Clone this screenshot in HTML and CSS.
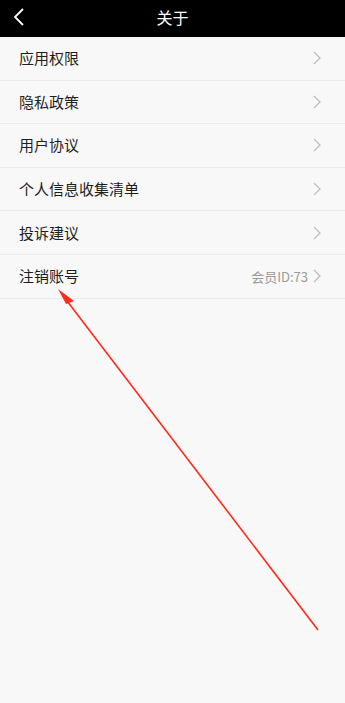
FILE: index.html
```html
<!DOCTYPE html>
<html lang="zh">
<head>
<meta charset="utf-8">
<link rel="stylesheet" href="styles.css">
</head>
<body>
<div class="page">
  <header class="bar">
    <svg class="back" width="14" height="20" viewBox="0 0 14 20"><path d="M11 2 L3 10 L11 18" fill="none" stroke="#fff" stroke-width="1.8"/></svg>
    <div class="title">关于</div>
  </header>
  <ul class="list">
    <li class="row"><span class="label">应用权限</span><span class="right"><svg class="chev" width="8" height="14" viewBox="0 0 8 14"><path d="M1 1 L7 7 L1 13" fill="none" stroke="#bdbdbd" stroke-width="1.2"/></svg></span></li>
    <li class="row"><span class="label">隐私政策</span><span class="right"><svg class="chev" width="8" height="14" viewBox="0 0 8 14"><path d="M1 1 L7 7 L1 13" fill="none" stroke="#bdbdbd" stroke-width="1.2"/></svg></span></li>
    <li class="row"><span class="label">用户协议</span><span class="right"><svg class="chev" width="8" height="14" viewBox="0 0 8 14"><path d="M1 1 L7 7 L1 13" fill="none" stroke="#bdbdbd" stroke-width="1.2"/></svg></span></li>
    <li class="row"><span class="label">个人信息收集清单</span><span class="right"><svg class="chev" width="8" height="14" viewBox="0 0 8 14"><path d="M1 1 L7 7 L1 13" fill="none" stroke="#bdbdbd" stroke-width="1.2"/></svg></span></li>
    <li class="row"><span class="label">投诉建议</span><span class="right"><svg class="chev" width="8" height="14" viewBox="0 0 8 14"><path d="M1 1 L7 7 L1 13" fill="none" stroke="#bdbdbd" stroke-width="1.2"/></svg></span></li>
    <li class="row"><span class="label">注销账号</span><span class="right"><span class="meta">会员ID:73</span><svg class="chev" width="8" height="14" viewBox="0 0 8 14"><path d="M1 1 L7 7 L1 13" fill="none" stroke="#bdbdbd" stroke-width="1.2"/></svg></span></li>
  </ul>
  <svg class="arrow" width="345" height="703" viewBox="0 0 345 703">
    <line x1="318" y1="630" x2="64" y2="297" stroke="#ff2a1a" stroke-width="1.6"/>
    <polygon points="58,289 74,301 66,304" fill="#ff2a1a"/>
  </svg>
</div>
</body>
</html>
```
FILE: styles.css
```css
html, body {
  margin: 0;
  padding: 0;
}
body {
  width: 345px;
  height: 703px;
  background: #f8f8f8;
  font-family: "Noto Sans CJK SC", "Noto Sans", sans-serif;
  overflow: hidden;
}
.page {
  position: relative;
  width: 345px;
  height: 703px;
}
.bar {
  height: 37px;
  background: #000;
  display: flex;
  align-items: center;
  justify-content: center;
  position: relative;
}
.back {
  position: absolute;
  left: 12px;
  top: 7px;
}
.title {
  color: #fff;
  font-size: 16px;
  line-height: 20px;
  margin-top: -4px;
}
.list {
  list-style: none;
  margin: 0;
  padding: 0;
}
.row {
  height: 43.6px;
  box-sizing: border-box;
  border-bottom: 1px solid #ebebeb;
  display: flex;
  align-items: center;
  justify-content: space-between;
  padding: 0 24px 0 19px;
}
.label {
  font-size: 15px;
  color: #1e1e1e;
  line-height: 20px;
}
.right {
  display: flex;
  align-items: center;
  gap: 5px;
}
.meta {
  font-size: 13px;
  color: #9a9a9a;
}
.chev {
  display: block;
}
.arrow {
  position: absolute;
  left: 0;
  top: 0;
  pointer-events: none;
}
```
